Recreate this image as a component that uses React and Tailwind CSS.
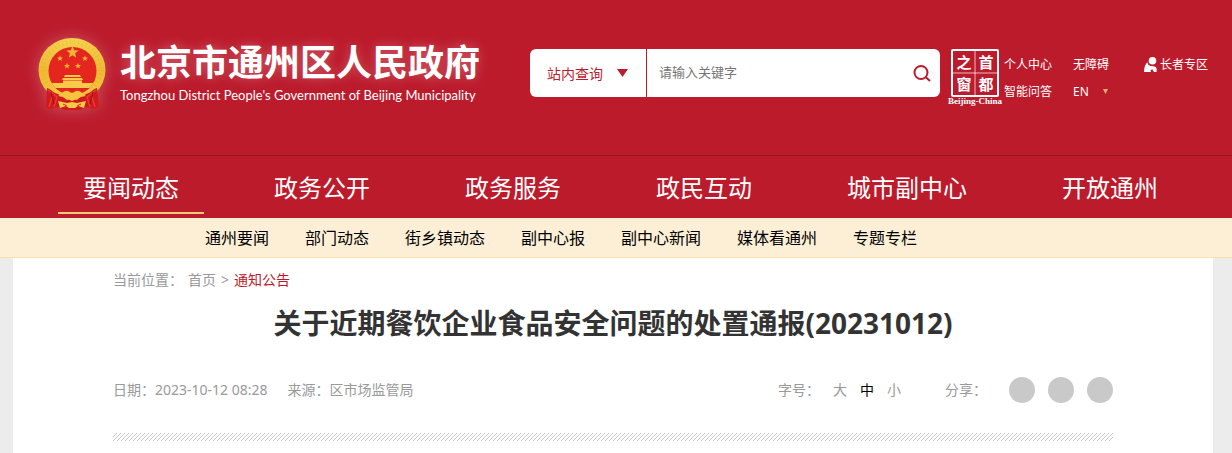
// ===========================================
// Tongzhou District — Notice article page
// ===========================================

import { useState } from "react";

const FONT = "font-['Noto_Sans','Noto_Sans_CJK_SC',sans-serif]";

const NAV = ["要闻动态", "政务公开", "政务服务", "政民互动", "城市副中心", "开放通州"];

const SUBNAV = ["通州要闻", "部门动态", "街乡镇动态", "副中心报", "副中心新闻", "媒体看通州", "专题专栏"];

const SIZES = ["大", "中", "小"];

const SHARE = ["微信", "微博", "QQ空间"];

// five-pointed star, centred on cx/cy
function Star({ cx, cy, r }) {
  const points = Array.from({ length: 10 }, (_, i) => {
    const a = (Math.PI / 5) * i - Math.PI / 2;
    const d = i % 2 ? r * 0.42 : r;
    return `${(cx + d * Math.cos(a)).toFixed(2)},${(cy + d * Math.sin(a)).toFixed(2)}`;
  }).join(" ");
  return <polygon points={points} fill="#edb634" />;
}

// national emblem
function Emblem() {
  return (
    <svg
      width="68"
      height="73"
      viewBox="0 0 68 73"
      className="shrink-0 drop-shadow-[0_0_8px_rgba(255,255,255,0.25)]"
      aria-hidden="true"
    >
      <defs>
        <linearGradient id="gold" x1="0" y1="0" x2="0" y2="1">
          <stop offset="0" stopColor="#f5d24f" />
          <stop offset="0.5" stopColor="#efb932" />
          <stop offset="1" stopColor="#f4cb42" />
        </linearGradient>
        <clipPath id="disc">
          <circle cx="34.500" cy="34" r="24" />
        </clipPath>
      </defs>
      <ellipse cx="34" cy="33" rx="33.500" ry="32" fill="url(#gold)" />
      <ellipse cx="34" cy="33" rx="29" ry="28" fill="none" stroke="#d99a22" strokeWidth="5" strokeDasharray="1 3" opacity="0.2" />
      <circle cx="34.500" cy="34" r="24" fill="#e4261f" />
      <Star cx={34.5} cy={15.5} r={6.5} />
      <Star cx={22} cy={21.5} r={3.2} />
      <Star cx={47} cy={21.5} r={3.2} />
      <Star cx={29} cy={29} r={3.2} />
      <Star cx={40} cy={29} r={3.2} />
      {/* gate */}
      <path d="M27 38h15l1 2H26zM25 41h19l1 2H24zM25 43.500h19V46H25z" fill="#f6cb49" />
      <g clipPath="url(#disc)">
        <path d="M0 46h68v5H0z" fill="#f6cb49" />
        <path d="M0 51h68v2H0z" fill="#e4261f" />
      </g>
      {/* ribbons */}
      <path d="M9 51c4 1 6 5 11 6l7 4 7 3 7-3 7-4c5-1 7-5 11-6l2 19-5 2-8-2-6 3H26l-6-3-8 2-4-2z" fill="#d01a1e" />
      <path d="M10 53l9 7-3 10M58 53l-9 7 3 10M14 60l-3 10M54 60l3 10" fill="none" stroke="#ea3a2e" strokeWidth="1.500" />
      <path d="M13 55l3 12M55 55l-3 12" stroke="#8f0f16" strokeWidth="0.800" />
      <path d="M20 59c3-2 6-6 10-5l4 2 4-2c4-1 7 3 10 5l-6 1-3 3-5-2-5 2-4-3z" fill="#f3c43c" />
      <path d="M20 64l9 2 5-1 5 1 9-2-2 7-6-2-3 2h-6l-3-2-6 2z" fill="#f6cb45" />
      <path d="M25 67l4 2M43 67l-4 2" stroke="#c8161c" strokeWidth="0.900" />
    </svg>
  );
}

// "Window of the Capital" seal
function CapitalSeal() {
  return (
    <a href="#capital" className="flex w-[54px] shrink-0 flex-col items-center text-white">
      <span className="relative grid size-12 grid-cols-2 grid-rows-2 place-items-center rounded-xs border-2 border-white text-[15px] leading-5 font-bold font-['Noto_Sans_CJK_SC',sans-serif]">
        <span>之</span>
        <span>首</span>
        <span>窗</span>
        <span>都</span>
        <svg viewBox="0 0 44 44" className="absolute inset-0 size-full" aria-hidden="true">
          <path d="M22 0v44M0 22h44" stroke="#fff" strokeOpacity="0.7" />
        </svg>
      </span>
      <span className="text-[9px] leading-2 font-bold whitespace-nowrap font-['Liberation_Serif',serif]">Beijing-China</span>
    </a>
  );
}

function Header() {
  return (
    <header className="bg-[#bc1b2c]">
      <div className="flex h-[155px] items-start pt-[37px] pr-6 pl-[38px]">
        <a href="#home" className="flex min-w-0 flex-1 items-start gap-[14px] text-white">
          <Emblem />
          <span className="pt-1 whitespace-nowrap">
            <span className="block text-4xl leading-[44px] font-bold [text-shadow:0_0_12px_rgba(255,255,255,0.3)]">
              北京市通州区人民政府
            </span>
            <span className="block text-[13px] leading-5 font-['Lato',sans-serif]">
              Tongzhou District People's Government of Beijing Municipality
            </span>
          </span>
        </a>

        {/* Search */}
        <form onSubmit={(e) => e.preventDefault()} className="mt-3 flex h-12 w-[410px] shrink-0 overflow-hidden rounded-md bg-white">
          <div className="relative w-[117px] shrink-0 border-r border-[#bc1b2c]">
            <select aria-label="查询范围" className="size-full appearance-none bg-transparent pl-[17px] text-[14px] text-[#bc1b2c] outline-none">
              <option>站内查询</option>
            </select>
            <svg width="11" height="8" viewBox="0 0 11 8" className="pointer-events-none absolute top-5 right-[18px]" aria-hidden="true">
              <path d="M0 0h11L5.500 8z" fill="#bc1b2c" />
            </svg>
          </div>
          <input
            type="text"
            aria-label="关键字"
            placeholder="请输入关键字"
            className="min-w-0 flex-1 px-3 text-[13px] outline-none placeholder:text-[#757575]"
          />
          <button type="submit" aria-label="搜索" className="flex w-[37px] items-center justify-center">
            <svg width="18" height="18" viewBox="0 0 18 18" fill="none" stroke="#bc1b2c" strokeWidth="2" aria-hidden="true">
              <circle cx="8" cy="8.500" r="6.500" />
              <path d="M12.500 13l4.500 4" />
            </svg>
          </button>
        </form>

        <div className="mt-3 ml-2">
          <CapitalSeal />
        </div>

        {/* Quick links */}
        <div className="mt-[14px] ml-[2px] grid shrink-0 grid-cols-[69px_71px_64px] text-[12px] leading-[27px] whitespace-nowrap text-white">
          <a href="#me">个人中心</a>
          <a href="#access">无障碍</a>
          <a href="#elder" className="flex items-center gap-[3px]">
            <svg width="13" height="15" viewBox="0 0 13 15" fill="#fff" aria-hidden="true">
              <circle cx="8.500" cy="3.800" r="3.800" />
              <path d="M4 4.500c-1 3 1 4 3 4.500l4 .5c2 1 2 3 1.500 5.500H10l-1.500-2.500-2 .5.5 2H0c0-4 1-8 4-10z" />
            </svg>
            长者专区
          </a>
          <a href="#qa">智能问答</a>
          <a href="#en" className="flex items-center gap-[14px]">
            EN
            <svg width="5" height="5" viewBox="0 0 5 5" aria-hidden="true">
              <path d="M0 0h5L2.500 5z" fill="#d8b36c" />
            </svg>
          </a>
        </div>
      </div>

      {/* Main nav */}
      <nav className="flex gap-[45px] border-t border-[#931526] pl-[58px] text-2xl whitespace-nowrap text-white">
        {NAV.map((item, i) => (
          <a
            key={item}
            href="#nav"
            className={`mb-1 border-b-2 px-[25px] pt-2 leading-12 ${i === 0 ? "border-[#f5c977]" : "border-transparent"}`}
          >
            {item}
          </a>
        ))}
      </nav>
    </header>
  );
}

// thin hatched rule under the article head
function Hatch() {
  return (
    <svg className="mt-[30px] block h-2 w-full" aria-hidden="true">
      <defs>
        <pattern id="hatch" width="4" height="4" patternUnits="userSpaceOnUse">
          <path d="M-1 5L5-1M-1 1L1-1M3 5L5 3" stroke="#c8c8c8" strokeWidth="1" />
        </pattern>
      </defs>
      <rect width="100%" height="8" fill="url(#hatch)" />
    </svg>
  );
}

function Article() {
  const [size, setSize] = useState("中");

  return (
    <main className="min-h-[195px] bg-white px-[100px] text-[14px] text-[#999]">
      <div className="flex gap-[5px] pt-3 leading-5">
        <span>当前位置：</span>
        <a href="#home">首页</a>
        <span>&gt;</span>
        <a href="#notice" className="text-[#bc1b2c]">通知公告</a>
      </div>

      <h1 className="mt-[13px] text-center text-[28px] leading-10 font-bold text-[#333]">
        关于近期餐饮企业食品安全问题的处置通报(20231012)
      </h1>

      <div className="mt-[34px] flex items-center leading-6">
        <span>日期：2023-10-12 08:28</span>
        <span className="ml-5">来源：区市场监管局</span>
        <div className="ml-auto flex gap-[13px]">
          <span>字号：</span>
          {SIZES.map((s) => (
            <button key={s} type="button" onClick={() => setSize(s)} className={s === size ? "text-black" : ""}>
              {s}
            </button>
          ))}
        </div>
        <div className="ml-11 flex items-center gap-[13px]">
          <span className="mr-[9px]">分享：</span>
          {SHARE.map((s) => (
            <button key={s} type="button" aria-label={s} className="size-[26px] rounded-full bg-[#c9c9c9]" />
          ))}
        </div>
      </div>

      <Hatch />
    </main>
  );
}

export default function App() {
  return (
    <div className={`min-h-screen bg-[#ececec] ${FONT}`}>
      <Header />

      {/* Sub nav */}
      <nav className="flex gap-9 border-b border-[#f8dfae] bg-[#fcefd6] pt-[2px] pl-[205px] text-base leading-[37px] whitespace-nowrap text-black">
        {SUBNAV.map((item) => (
          <a key={item} href="#sub">{item}</a>
        ))}
      </nav>

      <div className="pr-[19px] pl-[13px]">
        <Article />
      </div>
    </div>
  );
}
